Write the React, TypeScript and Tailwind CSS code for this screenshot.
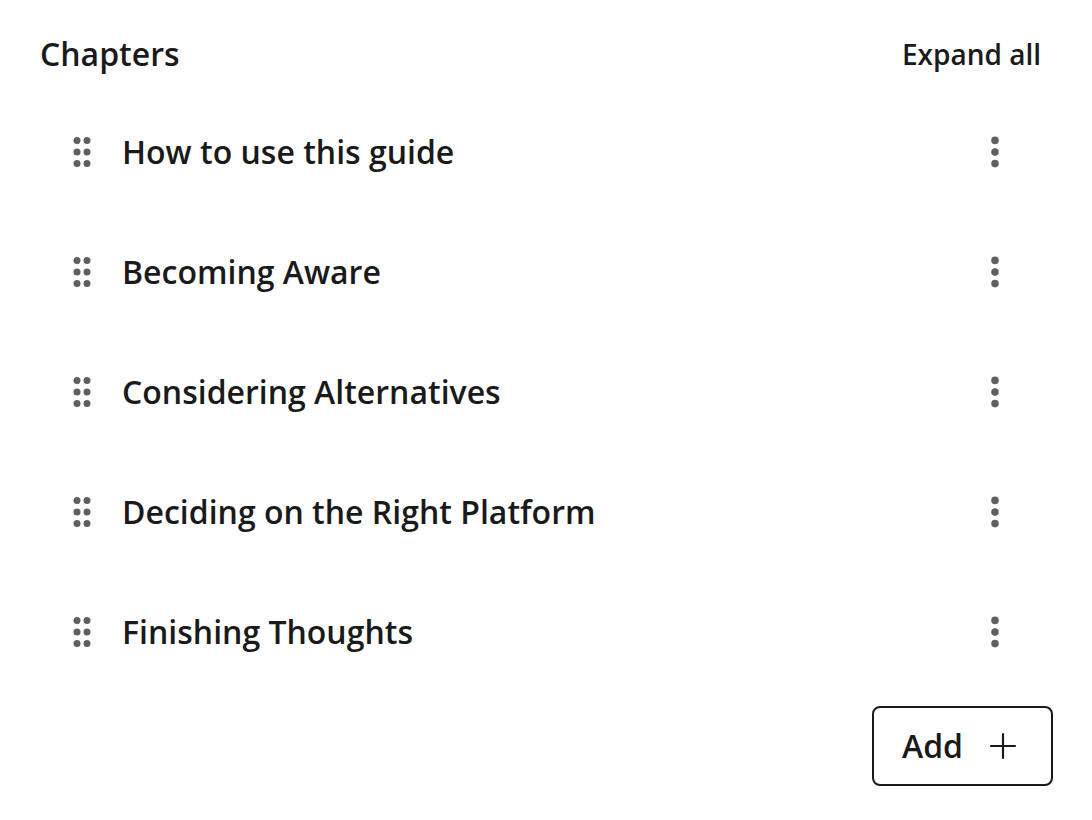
const chapters = [
  "How to use this guide",
  "Becoming Aware",
  "Considering Alternatives",
  "Deciding on the Right Platform",
  "Finishing Thoughts",
];

function DragHandleIcon() {
  return (
    <svg width="20" height="32" viewBox="0 0 20 32" fill="currentColor" aria-hidden="true">
      {[4.4, 16, 27.6].map((y) => (
        <g key={y}>
          <circle cx="5" cy={y} r="3.5" />
          <circle cx="15" cy={y} r="3.5" />
        </g>
      ))}
    </svg>
  );
}

function MoreIcon() {
  return (
    <svg width="10" height="32" viewBox="0 0 10 32" fill="currentColor" aria-hidden="true">
      <circle cx="5" cy="4.4" r="3.8" />
      <circle cx="5" cy="16" r="3.8" />
      <circle cx="5" cy="27.6" r="3.8" />
    </svg>
  );
}

function ChapterRow({ title }: { title: string }) {
  return (
    <li className="flex h-[120px] items-center">
      <button type="button" aria-label={`Move ${title}`} className="cursor-grab text-[#5c605f]">
        <DragHandleIcon />
      </button>
      <span className="ml-[30px] flex-1 text-[32px] leading-10">{title}</span>
      <button type="button" aria-label={`Options for ${title}`} className="text-[#5c605f]">
        <MoreIcon />
      </button>
    </li>
  );
}

export default function App() {
  return (
    <main className="bg-white pt-8 pr-[39px] pb-[34px] pl-10 font-['Open_Sans',sans-serif] font-semibold text-[#1a1a1a]">
      <header className="flex items-center justify-between pr-3">
        <h2 className="text-[32px] leading-[44px]">Chapters</h2>
        <button type="button" className="text-[28px] leading-[44px]">
          Expand all
        </button>
      </header>

      <ul className="mt-4 pr-[53px] pl-8">
        {chapters.map((title) => (
          <ChapterRow key={title} title={title} />
        ))}
      </ul>

      <div className="mt-[14px] flex justify-end">
        <button
          type="button"
          className="flex h-20 items-center gap-[26px] rounded-lg border-2 border-[#1a1a1a] pr-[34px] pl-7 text-[32px]"
        >
          Add
          <svg
            width="28"
            height="28"
            viewBox="0 0 28 28"
            fill="none"
            stroke="currentColor"
            strokeWidth="2.2"
            strokeLinecap="round"
            aria-hidden="true"
          >
            <path d="M14 2v24M2 14h24" />
          </svg>
        </button>
      </div>
    </main>
  );
}
